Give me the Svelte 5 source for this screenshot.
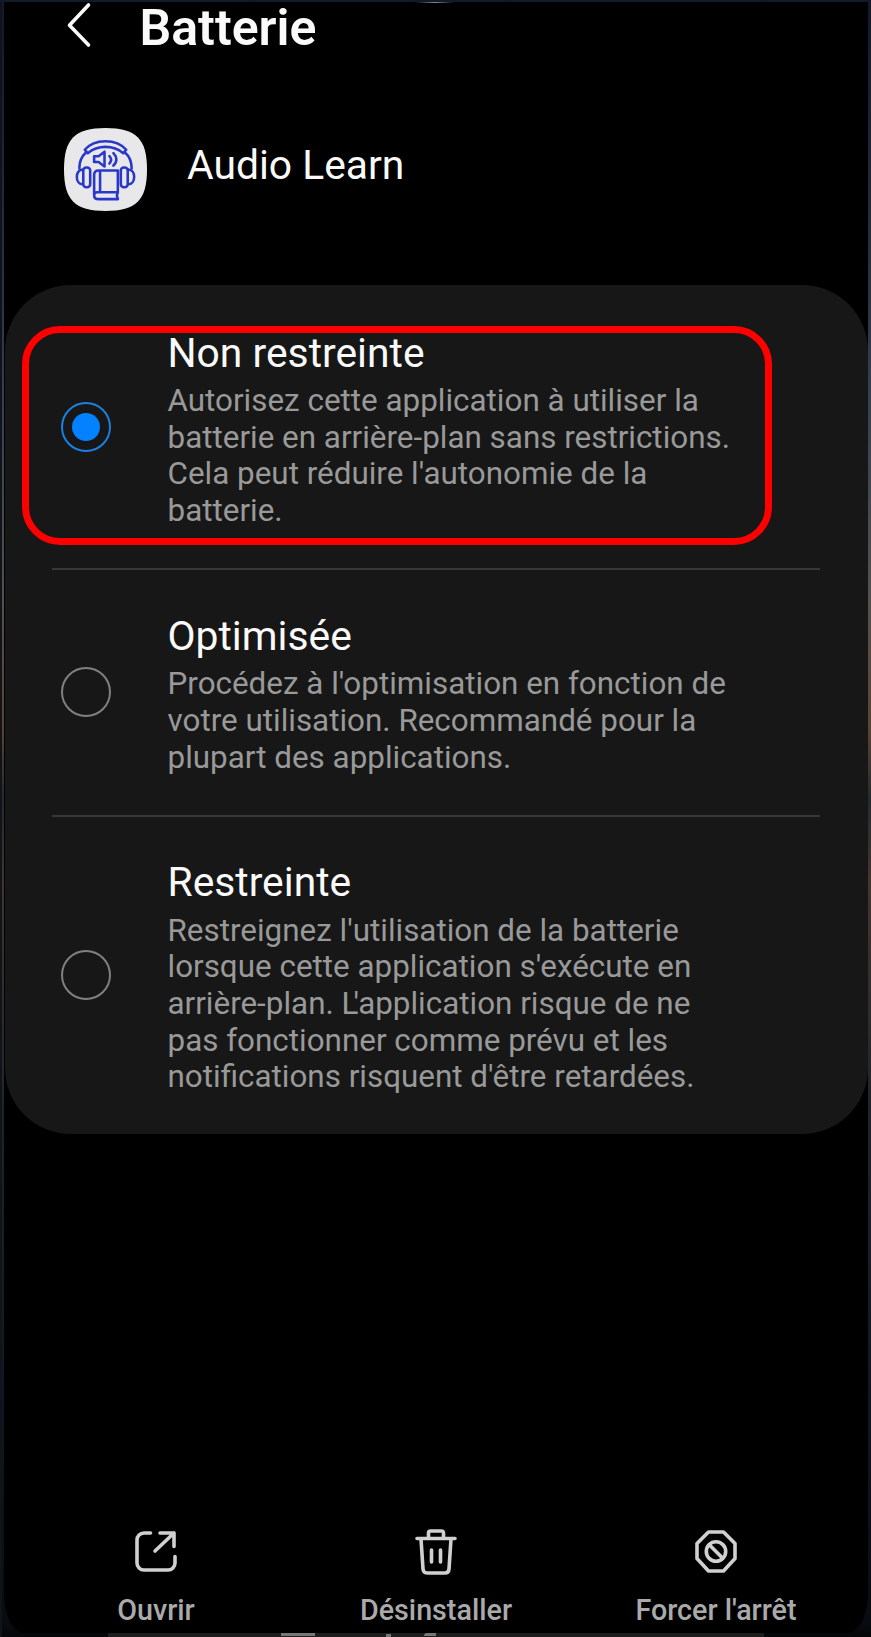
<script>
  const options = [
    {
      title: 'Non restreinte',
      selected: true,
      lines: [
        'Autorisez cette application à utiliser la',
        'batterie en arrière-plan sans restrictions.',
        "Cela peut réduire l'autonomie de la",
        'batterie.'
      ]
    },
    {
      title: 'Optimisée',
      selected: false,
      lines: [
        "Procédez à l'optimisation en fonction de",
        'votre utilisation. Recommandé pour la',
        'plupart des applications.'
      ]
    },
    {
      title: 'Restreinte',
      selected: false,
      lines: [
        "Restreignez l'utilisation de la batterie",
        "lorsque cette application s'exécute en",
        "arrière-plan. L'application risque de ne",
        'pas fonctionner comme prévu et les',
        "notifications risquent d'être retardées."
      ]
    }
  ];

  // A capital L before an apostrophe is set tighter than the font's own spacing.
  const pieces = (line) => line.split(/(L(?='))/);
</script>

<div class="frame">
  <main class="screen">
    <header>
      <svg class="back" width="26" height="46" viewBox="0 0 26 46">
        <path d="M22.5 3 3.500 23.300 22.5 43" />
      </svg>
      <h1>Batterie</h1>
    </header>

    <section class="app">
      <svg class="logo" width="83" height="83" viewBox="0 0 84 84">
        <path class="tile" d="M42 0C73 0 84 11 84 42S73 84 42 84 0 73 0 42 11 0 42 0Z" />
        <g class="art">
          <path d="M21 22C31 10.500 53 10.500 63 22L60 25.500C50 17 34 17 24 25.500Z" />
          <path d="M22 25C17.500 29 15.500 34 15.500 41M62 25c4.500 4 6.500 9 6.500 16" />
          <rect x="19.500" y="40" width="7" height="20" rx="3" />
          <rect x="57.500" y="40" width="7" height="20" rx="3" />
          <path d="M19 42c-8 0-8 15 0 15M65 42c8 0 8 15 0 15" />
          <path d="M30.500 28.500h4.500l6-4.500v15l-6-4.500h-4.500zM46 28.500c2 2 2 5 0 7.500M50 25.500c4 4 4 9 0 12.500" />
          <path d="M54.500 65V43H35c-3 0-4.500 1.500-4.500 4.500V68c0 3 1.500 4 4.500 4h19.500l-1-3.500 1-3.500H33.500c-2 0-3 1.500-3 3M36.500 43v22" />
        </g>
      </svg>
      <span>Audio Learn</span>
    </section>

    <section class="card">
      {#each options as option}
        <div class="option">
          <span class="radio" class:selected={option.selected}></span>
          <div class="copy">
            <h2>{option.title}</h2>
            <p>{#each option.lines as line}<span>{#each pieces(line) as piece}{#if piece === 'L'}<b>L</b>{:else}{piece}{/if}{/each}</span>{/each}</p>
          </div>
        </div>
      {/each}
      <div class="highlight"></div>
    </section>

    <footer>
      <div class="action">
        <svg width="48" height="48" viewBox="0 0 48 48">
          <path d="M18.500 5H12a7 7 0 0 0-7 7v23a7 7 0 0 0 7 7h24a7 7 0 0 0 7-7v-6.500M28 5h14v13.500M42 5 23 23" />
        </svg>
        <span>Ouvrir</span>
      </div>
      <div class="action">
        <svg width="48" height="48" viewBox="0 0 48 48">
          <path d="M5 10.500h38M16.500 10V5q0-2 2-2h11q2 0 2 2v5M9 11l2 30c.2 2.500 1.500 4 4 4h18c2.500 0 3.800-1.500 4-4l2-30M19.500 22v12M28.500 22v12" />
        </svg>
        <span>Désinstaller</span>
      </div>
      <div class="action">
        <svg width="48" height="48" viewBox="0 0 48 48">
          <path d="M16.500 4h15L43 15.500v15L31.500 43h-15L5 30.500v-15z" />
          <circle cx="24" cy="23.500" r="9.700" />
          <path d="m17.500 17 13 13" />
        </svg>
        <span>Forcer l'arrêt</span>
      </div>
    </footer>
  </main>
  <div class="peek"><i class="bar"></i><i class="stem"></i><i class="hook"></i></div>
  <div class="glint"></div>
</div>

<style>
  :global(body) { margin: 0; background: #000; }
  .frame {
    position: relative;
    box-sizing: border-box;
    width: 871px;
    height: 1637px;
    padding: 2px 3px 4px 4px;
    overflow: hidden;
    background:
      linear-gradient(90deg, #101318 2px, transparent 2px) 0 2px no-repeat,
      linear-gradient(#11192b 0, #202a39 200px, #344150 400px, #545150 600px, #5b4331 730px, #252a30 800px, #44362f 880px, #20252b 1100px, #111722 1400px, #080c12 1620px, #050607 1637px);
    font-family: Roboto, sans-serif;
  }
  .screen {
    display: flex;
    flex-direction: column;
    height: 1631px;
    background: #000;
    border-radius: 0 0 20px 20px / 0 0 40px 40px;
  }
  header { display: flex; height: 98px; padding-left: 61.500px; }
  .back { flex: none; fill: none; stroke: #fafafa; stroke-width: 3.600; stroke-linecap: round; stroke-linejoin: round; }
  h1 { margin: 1px 0 0 48px; color: #fafafa; font-size: 50px; line-height: 50px; font-weight: 600; }
  .app { display: flex; height: 185px; padding: 28px 0 0 59.500px; box-sizing: border-box; }
  .app span { margin: 13px 0 0 40.500px; color: #fafafa; font-size: 40.800px; line-height: 48px; }
  .tile { fill: #e8e8ea; }
  .art { fill: none; stroke: #2938c8; stroke-width: 2.600; stroke-linecap: round; stroke-linejoin: round; }
  .card { position: relative; height: 849px; margin: 0 0 0 1px; border-radius: 66px; background: #171717; }
  .option {
    display: flex;
    align-items: center;
    margin: 0 48px 0 47px;
    padding: 41.500px 0 38.500px 8.500px;
  }
  .option:first-child { padding-top: 43.500px; }
  .option + .option { border-top: 2px solid #383838; }
  .radio { position: relative; top: -2.200px; box-sizing: border-box; flex: none; display: grid; place-items: center; width: 50px; height: 50px; border: 2px solid #808080; border-radius: 50%; }
  .selected { border-color: #1b7fe0; }
  .selected::after { content: ''; width: 28px; height: 28px; border-radius: 50%; background: #0381fe; }
  .copy { margin-left: 57px; }
  h2 { margin: 0 0 6.500px; color: #fafafa; font-size: 40.800px; line-height: 48px; font-weight: 400; }
  p { margin: 0; color: #999; font-size: 31.400px; line-height: 36.670px; }
  p span { display: block; white-space: nowrap; }
  p b { margin-right: -5px; font-weight: 400; }
  .highlight { position: absolute; box-sizing: border-box; left: 17px; top: 41px; width: 750px; height: 219px; border: 7px solid #f00; border-radius: 38px; }
  footer { display: grid; grid-template-columns: repeat(3, 280px); margin: auto 0 6px 12px; }
  .action { display: flex; flex-direction: column; align-items: center; gap: 17px; color: #aaa; font-size: 28.700px; line-height: 34px; font-weight: 500; }
  .action svg { fill: none; stroke: #d0d0d0; stroke-width: 3.600; stroke-linecap: round; stroke-linejoin: round; }
  .peek { display: flex; box-sizing: border-box; margin: 0 104px; padding-left: 173px; height: 4px; background: #1d1d1d; }
  .peek i { height: 3px; background: #777; }
  .bar { width: 34px; }
  .stem { width: 5px; margin: 1px 0 0 71px; }
  .hook { width: 12px; margin-left: 33px; border-radius: 6px 0 0 0; }
  .glint { position: absolute; top: 2px; left: 415px; width: 40px; height: 1px; background: linear-gradient(90deg, transparent, #888, transparent); }
</style>
